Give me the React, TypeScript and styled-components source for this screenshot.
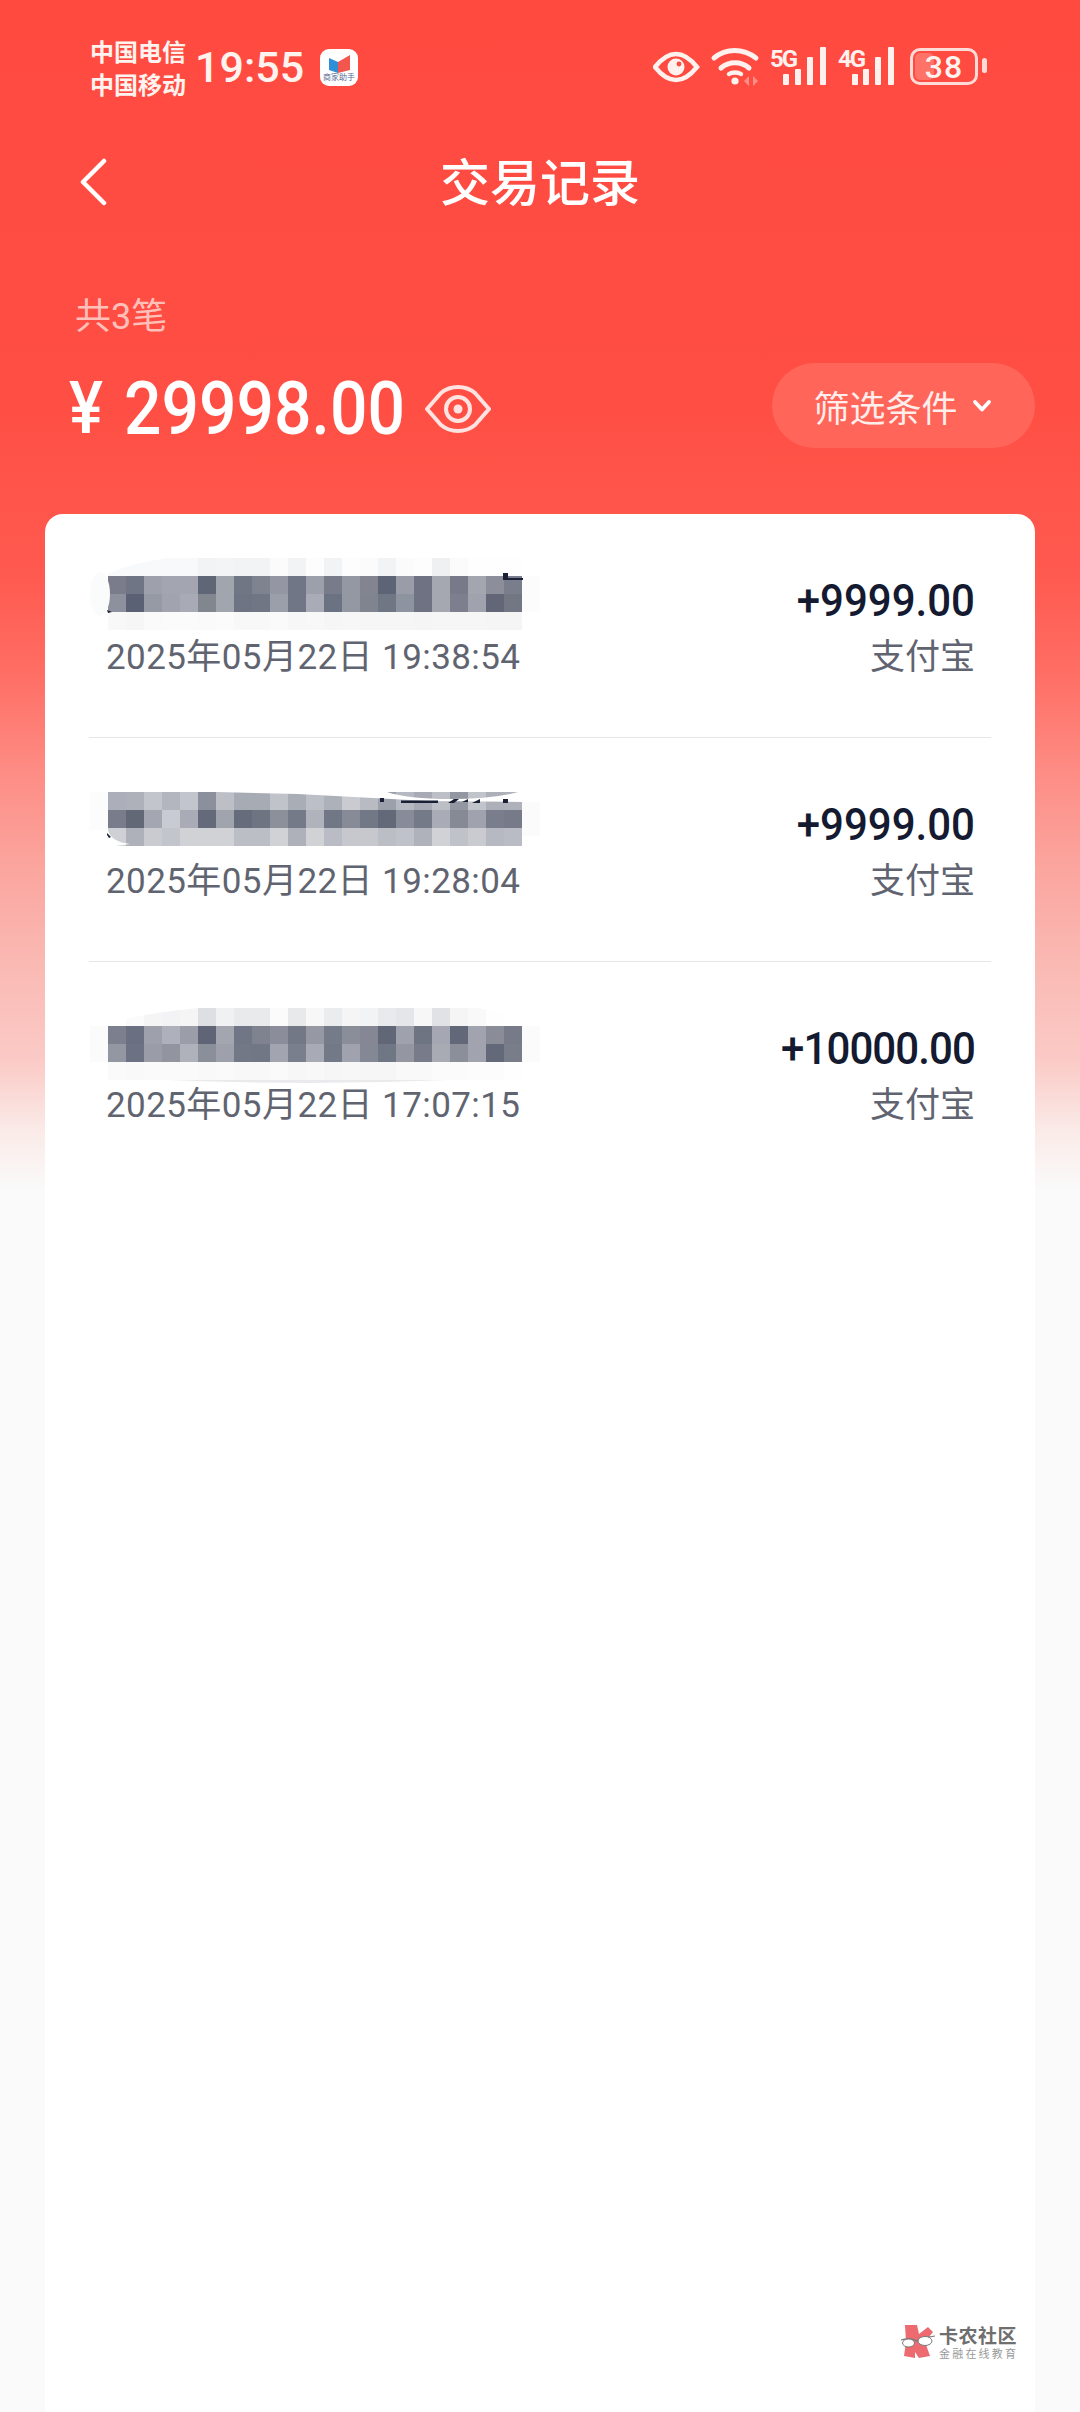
import React from "react";
import styled, { createGlobalStyle } from "styled-components";

const GlobalStyle = createGlobalStyle`
  html, body {
    margin: 0;
    padding: 0;
    background: #fafafa;
  }
  * {
    box-sizing: border-box;
  }
`;

type TradeRecord = {
  amount: string;
  date: string;
  offset: number;
  rows: string[];
  marks: React.ReactNode;
};

const INK = "#1a2035";

const records: TradeRecord[] = [
  {
    amount: "+9999.00",
    date: "2025年05月22日 19:38:54",
    offset: 0,
    rows: [
      "f8f9fa f8f9fa f8f9fa f8f9fa f8f9fa f2f3f5 f3f4f5 f2f3f5 f2f3f5 fbfbfb f2f3f5 fdfdfd f2f3f5 fdfdfd fbfbfc f2f3f5 fbfbfc fdfdfd eff0f2 fbfbfc fefefe fefefe fefefe",
      "7a7c8c 6f7585 9ea1ac a3a5b0 a3a6b1 5f6676 a0a5ae 717685 7f828f 9497a3 707686 9ca0ab 787b8a 9498a3 82858f 5d6475 9a9da8 6e7282 a5a7b1 787a89 a4a6af 8c8e99 7a7e8c",
      "8c919d 5a6174 969aa5 a1a3ae a8abb5 82868f a0a5ae 6f7484 717685 9b9fa9 707686 a9acb6 6b7282 9498a3 80848f 6f7684 8e93a0 6e7282 a5a7b1 7d7f8e a0a3ad 626677 737784",
      "f8f8f9 f6f6f7 fafafa fbfbfb fbfbfb fafafa fbfbfb f8f8f9 f8f8f9 fafafa f7f7f8 f8f8f8 f6f6f7 f7f7f8 f6f6f7 f6f6f7 f6f6f7 f5f5f6 f6f6f7 f6f6f7 f6f6f7 f5f5f6 f5f5f6",
    ],
    marks: (
      <>
        <path d="M0 0 L60 0 Q20 6 0 16Z" fill="#fff" />
        <ellipse cx="-8" cy="36" rx="10" ry="22" fill="#fafbfb" />
        <rect x="414" y="18" width="18" height="36" fill="#fcfcfc" />
        <rect x="395" y="15" width="5" height="7" fill={INK} />
        <rect x="399" y="20" width="16" height="2" fill={INK} />
        <path d="M-1 52 L4 54 L0 55Z" fill={INK} />
      </>
    ),
  },
  {
    amount: "+9999.00",
    date: "2025年05月22日 19:28:04",
    offset: 10,
    rows: [
      "acafb9 aeb1ba c3c5cc b3b6bf c3c5cc 8b909c bcbfc6 a7abb4 a7abb4 c1c3ca a9adb6 bcbfc6 adb1b9 c9cbd1 b8bbc2 9ca0ab b6b9c1 a8abb5 bcbfc6 9397a2 c2c4cb adb0b9 afb2bb",
      "787c8b 636877 a4a7b1 c9cbd2 a9acb6 656a7a a0a4ad 676c7c 6f7483 8c909b 757a88 b0b3bc 727786 878b97 737887 636979 888c98 757a88 a9acb6 868a95 a0a3ad 7a7e8c 777b89",
      "ced0d5 aeb1ba c9cbd1 c3c5cc d0d2d6 d0d2d6 d0d2d6 bbbec5 bbbec5 d0d2d6 aeb1ba d0d2d6 b9bcc4 c6c8ce c6c8ce bbbec5 bfc2c9 afb2bb d0d2d6 c0c2c9 cacbd1 b6b9c1 b9bcc4",
    ],
    marks: (
      <>
        <path d="M109 0 L190 2 L265 6 L320 9 L414 10 L414 0 L410 0 Q385 7 342 7 Q300 7 279 0Z" fill="#fff" />
        <path d="M0 38 Q3 50 22 52 L0 55Z" fill="#fff" />
        <rect x="-18" y="0" width="18" height="38" fill="#fcfcfc" />
        <rect x="414" y="10" width="18" height="34" fill="#fbfbfb" />
        <rect x="272" y="6" width="4" height="4" fill={INK} />
        <rect x="293" y="8.5" width="37" height="2.5" fill={INK} />
        <path d="M340 11 L346 7 L351 7 L346 11Z M354 10 L360 7 L360 10Z M364 11 L372 7 L372 11Z" fill={INK} />
        <rect x="395" y="7" width="5" height="4" fill={INK} />
        <path d="M-1 41 L3 45 L1 46 L-1 43Z" fill={INK} />
      </>
    ),
  },
  {
    amount: "+10000.00",
    date: "2025年05月22日 17:07:15",
    offset: 2,
    rows: [
      "ffffff fbfbfb f5f5f6 f3f3f5 f5f5f6 dedfe3 f0f1f2 e9eaec e9eaec fbfbfb e8e9eb f7f7f8 ebecee f5f5f6 f2f3f4 e9eaec e5e6e9 f7f7f8 e1e2e6 f5f5f6 f9f9fa fefefe ffffff",
      "7c7f8d 6a7082 9ea1ac aeb1bb 9b9ea8 5f6476 a3a6af 707686 7f838f 8b8e9a 737887 9699a4 767b89 8a8e99 858894 626778 9fa2ac 6f7483 a5a8b2 636878 a1a4ae 8a8d98 777b89",
      "9297a2 6c7284 9a9da8 9295a0 afb2bb 8b8f9a 9ea1ab 737887 727786 a2a5af 7a7f8d a8abb5 747987 a0a3ad 848895 6f7684 9497a2 787c8a a8abb4 8a8f9a a1a4ae 646979 797d8a",
      "fafafa f9f9f9 fafafa fafafa fafafa f9f9f9 fafafa f8f8f9 f8f8f9 fafafa f7f7f8 f8f8f8 f6f6f7 f7f7f8 f6f6f7 f6f6f7 f9f9f9 f9f9f9 fbfbfb fbfbfb fcfcfc fcfcfc fefefe",
    ],
    marks: (
      <>
        <path d="M0 0 L90 0 Q30 6 0 16Z" fill="#fff" />
        <path d="M370 0 L414 0 L414 16 Q400 6 370 0Z" fill="#fff" />
        <rect x="-18" y="18" width="18" height="36" fill="#fbfbfb" />
        <rect x="414" y="18" width="18" height="36" fill="#fbfbfb" />
        <path d="M60 72 Q200 78 340 72Z" fill="#eaeaed" />
      </>
    ),
  },
];

const StatusIcons = () => (
  <svg width="340" height="44" viewBox="0 0 340 44" fill="none">
    {/* eye */}
    <path d="M2 22 C10 12 18 9 23 9 C28 9 36 12 44 22 C36 32 28 35 23 35 C18 35 10 32 2 22Z" stroke="#fff1ee" strokeWidth="4.5" />
    <circle cx="23" cy="22" r="8.5" fill="#fff1ee" />
    <circle cx="26" cy="19" r="2.4" fill="#ff4a40" />
    {/* wifi */}
    <path d="M61 13 C73 3 90 3 103 13" stroke="#fff1ee" strokeWidth="5" strokeLinecap="round" />
    <path d="M68 23 C76 16 88 16 96 23" stroke="#fff1ee" strokeWidth="5" strokeLinecap="round" />
    <path d="M76 29 C79 27 85 27 88 29" stroke="#fff1ee" strokeWidth="4.5" strokeLinecap="round" />
    <circle cx="82" cy="36" r="3.6" fill="#fff1ee" />
    <path d="M96 31 L96 41 L91 36Z M100 31 L100 41 L105 36Z" fill="#ff8f86" />
    {/* 5G bars */}
    <rect x="130" y="29" width="6" height="11" rx="1" fill="#fff1ee" />
    <rect x="142" y="24" width="6" height="16" rx="1" fill="#fff1ee" />
    <rect x="154" y="12" width="6" height="28" rx="1" fill="#fff1ee" />
    <rect x="167" y="2" width="6" height="38" rx="1" fill="#fff1ee" />
    {/* 4G bars */}
    <rect x="199" y="29" width="6" height="11" rx="1" fill="#fff1ee" />
    <rect x="210" y="24" width="6" height="16" rx="1" fill="#fff1ee" />
    <rect x="222" y="12" width="6" height="28" rx="1" fill="#fff1ee" />
    <rect x="235" y="2" width="6" height="38" rx="1" fill="#fff1ee" />
  </svg>
);

const BackIcon = () => (
  <svg width="30" height="48" viewBox="0 0 30 48" fill="none">
    <path d="M26 3 L5 24 L26 45" stroke="#fff" strokeWidth="4.5" strokeLinecap="round" strokeLinejoin="round" />
  </svg>
);

const AmountEye = () => (
  <svg width="66" height="50" viewBox="0 0 66 50" fill="none">
    <path d="M2 25 L16 9 C22 4 27 3 33 3 C39 3 44 4 50 9 L64 25 L50 41 C44 46 39 47 33 47 C27 47 22 46 16 41Z" stroke="#ffe3e0" strokeWidth="4" strokeLinejoin="round" />
    <circle cx="33" cy="25" r="12" stroke="#ffe3e0" strokeWidth="4" />
    <circle cx="33" cy="25" r="4.5" fill="#ffe3e0" />
  </svg>
);

const Chevron = () => (
  <svg width="20" height="14" viewBox="0 0 20 14" fill="none">
    <path d="M3 3 L10 10.5 L17 3" stroke="#fff" strokeWidth="3.8" strokeLinecap="round" strokeLinejoin="round" />
  </svg>
);

const AppBadge = () => (
  <BadgeBox>
    <svg width="26" height="20" viewBox="0 0 26 20">
      <path d="M3 4 L12 8 L12 19 L3 16Z" fill="#2f8fd6" />
      <path d="M24 1 L12 8 L12 19 L24 16Z" fill="#f2564c" />
    </svg>
    <BadgeText>商家助手</BadgeText>
  </BadgeBox>
);

const WatermarkLogo = () => (
  <svg width="36" height="36" viewBox="0 0 36 36" fill="none">
    <path d="M5 1 L17 1 L19 10 L28 3 L33 8 L25 18 L30 32 L19 34 L15 28 L15 34 L4 32 L6 18Z" fill="#ec6a70" />
    <path d="M1 16 C8 14 13 15 17 17 C22 14 28 13 35 12" stroke="#777" strokeWidth="1.2" />
    <ellipse cx="8.5" cy="19" rx="6" ry="4" fill="#fff" stroke="#777" strokeWidth="1" />
    <ellipse cx="25" cy="17" rx="7" ry="4.5" fill="#fff" stroke="#777" strokeWidth="1" />
  </svg>
);

export default function App() {
  return (
    <>
      <GlobalStyle />
      <Page>
        <StatusBar>
          <Carriers>
            <span>中国电信</span>
            <span>中国移动</span>
          </Carriers>
          <Clock>19:55</Clock>
          <AppBadge />
          <StatusRight>
            <StatusIcons />
            <NetworkLabel $left={117}>5G</NetworkLabel>
            <NetworkLabel $left={185}>4G</NetworkLabel>
            <Battery>
              <BatteryLevel />
              <BatteryValue>38</BatteryValue>
              <BatteryCap />
            </Battery>
          </StatusRight>
        </StatusBar>

        <NavBar>
          <BackButton>
            <BackIcon />
          </BackButton>
          <Title>交易记录</Title>
        </NavBar>

        <Summary>
          <Count>共3笔</Count>
          <SummaryRow>
            <Total>
              <Yen>¥</Yen>
              <TotalValue>29998.00</TotalValue>
              <AmountEye />
            </Total>
            <FilterButton>
              筛选条件
              <Chevron />
            </FilterButton>
          </SummaryRow>
        </Summary>

        <Card>
          {records.map((record, i) => (
            <Row key={record.date} $last={i === records.length - 1}>
              <RowLeft>
                <Mosaic $offset={record.offset}>
                  {record.rows.map((row, r) => (
                    <MosaicRow key={r}>
                      {row.split(" ").map((color, c) => (
                        <Cell key={c} style={{ background: `#${color}` }} />
                      ))}
                    </MosaicRow>
                  ))}
                  <Marks $offset={record.offset} width="414" height="72" viewBox="0 0 414 72">
                    {record.marks}
                  </Marks>
                </Mosaic>
                <DateText>{record.date}</DateText>
              </RowLeft>
              <RowRight>
                <Amount $tight={record.amount.length > 8}>{record.amount}</Amount>
                <Channel>支付宝</Channel>
              </RowRight>
            </Row>
          ))}
        </Card>

        <Watermark>
          <WatermarkLogo />
          <WatermarkText>
            <WatermarkName>卡农社区</WatermarkName>
            <WatermarkSlogan>金融在线教育</WatermarkSlogan>
          </WatermarkText>
        </Watermark>
      </Page>
    </>
  );
}

const Page = styled.div`
  position: relative;
  width: 1080px;
  height: 2412px;
  overflow: hidden;
  font-family: Roboto, "Noto Sans CJK SC", sans-serif;
  background: linear-gradient(
    180deg,
    #ff4a40 0,
    #ff4e44 400px,
    #ff5449 480px,
    #ff5a50 577px,
    #ff6e64 673px,
    #fd8c84 770px,
    #fba59e 866px,
    #fab9b3 963px,
    #fbcac6 1060px,
    #faebe8 1132px,
    #fafafa 1190px
  );
`;

const StatusBar = styled.div`
  display: flex;
  align-items: center;
  height: 110px;
  padding: 24px 0 0 90px;
  color: #fff3f0;
`;

const Carriers = styled.div`
  display: flex;
  flex-direction: column;
  width: 105px;
  font-size: 24px;
  line-height: 33px;
  font-weight: 700;
  font-family: "Noto Sans CJK SC", sans-serif;
`;

const Clock = styled.div`
  width: 125px;
  font-size: 43px;
  font-weight: 500;
`;

const BadgeBox = styled.div`
  display: flex;
  flex-direction: column;
  align-items: center;
  width: 38px;
  height: 37px;
  padding-top: 5px;
  background: #fff;
  border-radius: 9px;
`;

const BadgeText = styled.span`
  margin-top: -2px;
  font-size: 8px;
  line-height: 10px;
  color: #5a6a90;
  white-space: nowrap;
  font-family: "Noto Sans CJK SC", sans-serif;
`;

const StatusRight = styled.div`
  position: relative;
  display: flex;
  align-items: center;
  margin-left: 295px;
  height: 50px;
`;

const NetworkLabel = styled.span<{ $left: number }>`
  position: absolute;
  left: ${(p) => p.$left}px;
  top: 5px;
  font-size: 24px;
  font-weight: 700;
  line-height: 24px;
  letter-spacing: -2px;
  color: #fff1ee;
`;

const Battery = styled.div`
  position: absolute;
  left: 257px;
  top: 6px;
  display: flex;
  align-items: center;
  justify-content: center;
  width: 68px;
  height: 37px;
  border: 3.5px solid #ffdcd8;
  border-radius: 10px;
`;

const BatteryLevel = styled.div`
  position: absolute;
  left: 2px;
  top: 2px;
  bottom: 2px;
  width: 30%;
  background: #ff7268;
  border-radius: 5px;
`;

const BatteryValue = styled.span`
  position: relative;
  font-size: 32px;
  line-height: 30px;
  font-weight: 500;
  letter-spacing: 1px;
  color: #fff3f0;
`;

const BatteryCap = styled.div`
  position: absolute;
  right: -12px;
  top: 7px;
  width: 5px;
  height: 15px;
  border-radius: 3px;
  background: #ffdcd8;
`;

const NavBar = styled.div`
  position: relative;
  display: flex;
  align-items: center;
  justify-content: center;
  height: 144px;
  padding-bottom: 6px;
`;

const BackButton = styled.div`
  position: absolute;
  left: 78px;
  top: 48px;
  display: flex;
`;

const Title = styled.div`
  font-size: 50px;
  line-height: 60px;
  font-weight: 500;
  color: #fff;
  font-family: "Noto Sans CJK SC", sans-serif;
`;

const Summary = styled.div`
  display: flex;
  flex-direction: column;
  height: 260px;
  padding: 43px 45px 0 69px;
`;

const Count = styled.div`
  padding-left: 6px;
  font-size: 36px;
  line-height: 40px;
  color: #ffc0ba;
`;

const SummaryRow = styled.div`
  display: flex;
  align-items: center;
  justify-content: space-between;
  margin-top: 26px;
  height: 85px;
`;

const Total = styled.div`
  display: flex;
  align-items: center;
  padding-top: 6px;
  color: #fff;
  font-weight: 500;
`;

const Yen = styled.span`
  display: inline-block;
  width: 55px;
  font-size: 64px;
  transform: scaleY(1.12);
`;

const TotalValue = styled.span`
  display: inline-block;
  margin-right: 20px;
  font-size: 66px;
  transform: scaleY(1.12);
`;

const FilterButton = styled.div`
  display: flex;
  align-items: center;
  justify-content: center;
  gap: 14px;
  width: 263px;
  height: 85px;
  padding-right: 2px;
  border-radius: 43px;
  background: #ff6559;
  font-size: 36px;
  color: #ffeeec;
`;

const Card = styled.div`
  margin: 0 45px;
  height: 1900px;
  background: #fff;
  border-radius: 18px 18px 0 0;
`;

const Row = styled.div<{ $last: boolean }>`
  display: flex;
  justify-content: space-between;
  height: 224px;
  margin: 0 44px;
  padding: 44px 16px 0 17px;
  border-bottom: ${(p) => (p.$last ? "none" : "1px solid #e6e7ea")};
`;

const RowLeft = styled.div`
  display: flex;
  flex-direction: column;
`;

const Mosaic = styled.div<{ $offset: number }>`
  position: relative;
  height: 72px;
  padding-top: ${(p) => p.$offset}px;
  margin-left: 2px;
`;

const MosaicRow = styled.div`
  display: flex;
`;

const Cell = styled.div`
  width: 18px;
  height: 18px;
`;

const Marks = styled.svg<{ $offset: number }>`
  position: absolute;
  left: 0;
  top: ${(p) => p.$offset}px;
  overflow: visible;
`;

const DateText = styled.div`
  margin-top: 8px;
  font-size: 35px;
  line-height: 40px;
  letter-spacing: 0.42px;
  color: #5f6470;
  white-space: nowrap;
`;

const RowRight = styled.div`
  display: flex;
  flex-direction: column;
  align-items: flex-end;
  padding-top: 23px;
`;

const Amount = styled.div<{ $tight: boolean }>`
  font-size: 42px;
  line-height: 40px;
  font-weight: 500;
  letter-spacing: ${(p) => (p.$tight ? "-0.9px" : "0")};
  color: #141a30;
  transform: scaleY(1.06);
`;

const Channel = styled.div`
  margin-top: 17px;
  font-size: 35px;
  line-height: 40px;
  color: #5f6470;
`;

const Watermark = styled.div`
  position: absolute;
  left: 900px;
  top: 2324px;
  display: flex;
  align-items: center;
  gap: 3px;
`;

const WatermarkText = styled.div`
  display: flex;
  flex-direction: column;
  font-family: "Noto Sans CJK SC", sans-serif;
`;

const WatermarkName = styled.span`
  font-size: 19px;
  line-height: 22px;
  font-weight: 700;
  letter-spacing: 0.5px;
  color: #6f6f6f;
`;

const WatermarkSlogan = styled.span`
  font-size: 11px;
  line-height: 14px;
  letter-spacing: 2.2px;
  color: #9a9a9a;
`;
